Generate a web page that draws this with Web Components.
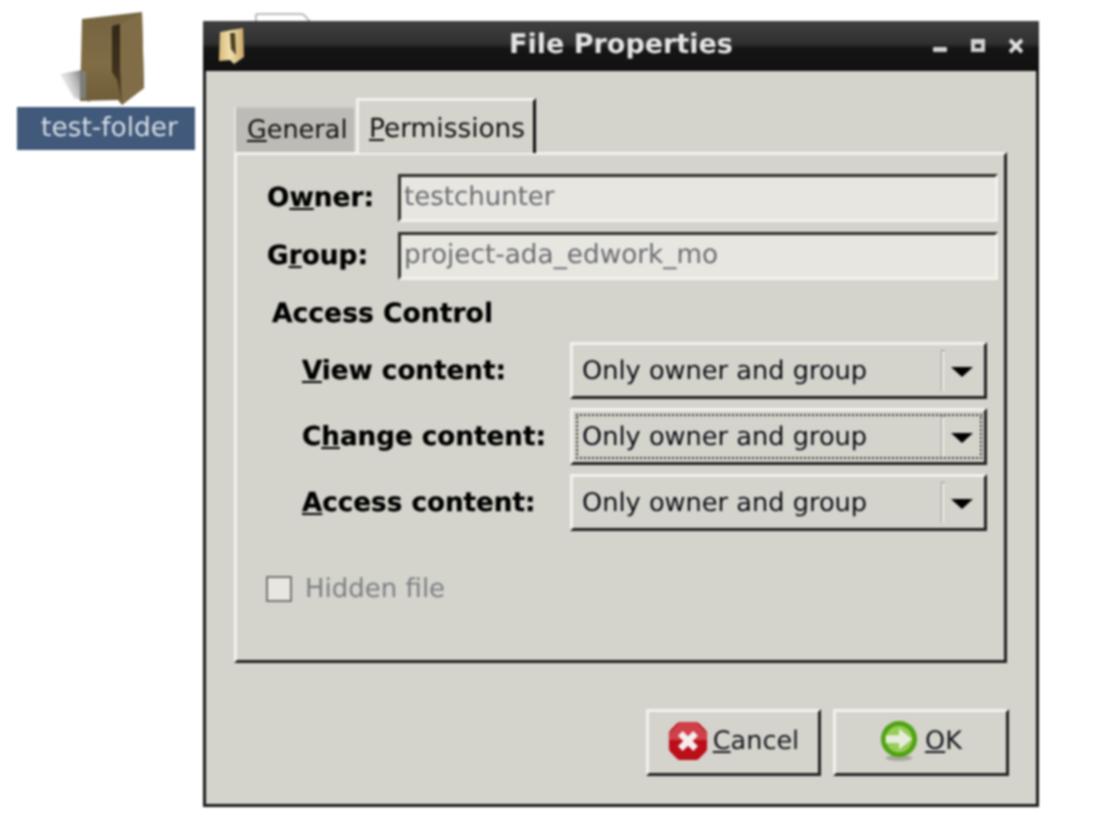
<!DOCTYPE html>
<html><head><meta charset="utf-8">
<style>
html,body{margin:0;padding:0;background:#fff;width:1096px;height:830px;overflow:hidden}
body{font-family:"DejaVu Sans",sans-serif;font-size:26px;color:#111;text-rendering:geometricPrecision}
</style></head><body>
<x-desktop>
  <x-desktop-icon slot="icons">test-folder</x-desktop-icon>
  <x-window slot="windows" title="File Properties">
    <x-notebook>
      <x-tab slot="tabs" style="width:120px;font-size:25.5px"><u>G</u>eneral</x-tab>
      <x-tab slot="tabs" active style="width:180px;font-size:26.4px"><u>P</u>ermissions</x-tab>
      <x-form-row width="131"><b>O<u>w</u>ner:</b><x-entry slot="field">testchunter</x-entry></x-form-row>
      <x-form-row width="131" style="margin-top:10px"><b>G<u>r</u>oup:</b><x-entry slot="field" style="font-size:26.3px">project-ada_edwork_mo</x-entry></x-form-row>
      <x-section heading="Access Control">
        <x-combo-row><span><u>V</u>iew content:</span></x-combo-row>
        <x-combo-row focused><span>C<u>h</u>ange content:</span></x-combo-row>
        <x-combo-row><span><u>A</u>ccess content:</span></x-combo-row>
      </x-section>
      <x-check>Hidden file</x-check>
    </x-notebook>
    <x-button slot="actions" kind="cancel" style="width:175px"><u>C</u>ancel</x-button>
    <x-button slot="actions" kind="ok"><u>O</u>K</x-button>
  </x-window>
</x-desktop>
<script>
function def(name,css,html){
  customElements.define(name,class extends HTMLElement{
    connectedCallback(){
      if(this.shadowRoot)return;
      const r=this.attachShadow({mode:'open'});
      r.innerHTML='<style>'+css+'</style>'+(typeof html==='function'?html(this):html);
    }
  });
}
def('x-desktop',`:host{display:block;position:relative;width:1096px;height:830px;overflow:hidden;filter:blur(.8px)}`,
`<slot name="icons"></slot>
<svg style="position:absolute;left:254px;top:11px" width="60" height="12"><path d="M2 12V4Q2 3 4 3H47Q49 3 51 5L57 12" fill="#fff" stroke="#bbb" stroke-width="2"/></svg>
<slot name="windows"></slot>`);
def('x-desktop-icon',`:host{position:absolute;left:17px;top:12px;width:178px;display:flex;flex-direction:column;align-items:stretch}
svg{display:block;margin-bottom:1px}
.l{height:43px;background:#41597a;color:#d6dde6;display:flex;align-items:center;justify-content:center;padding:0 0 1px 7px;box-sizing:border-box;font-size:26.4px;line-height:1}`,
`<svg width="178" height="94" viewBox="17 12 178 94">
<defs><linearGradient id="s" x1="1" x2="0" y1="0" y2=".4"><stop offset="0" stop-color="#3a3a3a"/><stop offset="1" stop-color="#ccc" stop-opacity=".25"/></linearGradient>
<linearGradient id="d" x1="0" x2="0" y1="0" y2="1"><stop offset="0" stop-color="#332818"/><stop offset=".6" stop-color="#3f331d"/><stop offset="1" stop-color="#615030"/></linearGradient>
<linearGradient id="b" x1="0" x2="0" y1="0" y2="1"><stop offset="0" stop-color="#75643f"/><stop offset=".55" stop-color="#806c45"/><stop offset="1" stop-color="#6e5c38"/></linearGradient></defs>
<path d="M82 70L60 74L74 98L90 102Z" fill="url(#s)"/>
<path d="M82 19L142 12L144 88L122 105L118 100L80 101Z" fill="url(#b)"/>
<path d="M120 24L142 13L144 88L122 104L120 70Z" fill="#806c46"/>
<path d="M112 26L120 24V68L122 104L117 80L112 72Z" fill="url(#d)"/>
<path d="M80 72L86 70V99H80Z" fill="#7c7e78"/>
</svg><div class="l"><slot></slot></div>`);
def('x-window',`:host{position:absolute;left:203px;top:21px;width:836px;height:786px;box-sizing:border-box;border:3px solid #1c1c1a;border-top:0;background:#d4d3cc;display:flex;flex-direction:column}
.t{height:50px;flex:none;background:linear-gradient(#404040 0,#303030 45%,#151515 55%,#111 100%);display:grid;grid-template-columns:1fr auto 1fr;align-items:center;margin:0 -3px;color:#e4e4e4;font-weight:bold;font-size:27px}
.t span{padding-bottom:4px}
.i{display:block;margin-left:14px}
.w{justify-self:end;display:flex;gap:24px;margin-right:16px;align-items:center}
.b{flex:1;display:flex;flex-direction:column;padding:27px 29px 28px 28px}
.a{display:flex;justify-content:flex-end;gap:12px;margin:46px -2px 0 0}`,
h=>`<div class="t"><svg class="i" width="28" height="38" viewBox="0 0 28 38"><defs><linearGradient id="f" x1="0" x2="1" y1="0" y2="0"><stop offset="0" stop-color="#d9bb78"/><stop offset=".45" stop-color="#f0dfae"/><stop offset="1" stop-color="#c8a868"/></linearGradient></defs><path d="M3 5L26 1L27 30L17 37L13 33L2 34Z" fill="url(#f)"/><path d="M13 6H18L19 28L14 22Z" fill="#4d3f24"/></svg>
<span>${h.getAttribute('title')}</span>
<div class="w"><svg width="14" height="16"><rect x="0" y="9" width="14" height="5" rx="1" fill="#d0d0d0"/></svg><svg width="14" height="16"><path d="M0 1h14v13H0zM4 6v4h6V6z" fill="#d0d0d0" fill-rule="evenodd"/></svg><svg width="14" height="16"><path d="M1 2L13 14M13 2L1 14" stroke="#e0e0e0" stroke-width="4"/></svg></div></div>
<div class="b"><slot></slot><div class="a"><slot name="actions"></slot></div></div>`);
def('x-notebook',`:host{display:block}
.tabs{display:flex;align-items:flex-end;gap:2px;height:54px;position:relative;z-index:1}
.p{height:511px;box-sizing:border-box;border-top:3px solid #f2f1ec;border-left:3px solid #f2f1ec;border-right:3px solid #222;border-bottom:3px solid #222;padding:19px 6px 0 29px;display:flex;flex-direction:column}`,
`<div class="tabs"><slot name="tabs"></slot></div><div class="p"><slot></slot></div>`);
def('x-tab',`:host{display:block;box-sizing:border-box;height:46px;padding:0 0 0 11px;background:#bcbbb5;border-top:2px solid #cfcec8;border-left:2px solid #e6e5df;line-height:44px;white-space:nowrap}
:host([active]){height:55px;line-height:56px;background:#d4d3cc;margin-bottom:-1px;border-top:3px solid #f2f1ec;border-left:3px solid #f2f1ec;border-right:3px solid #111;padding:0 0 0 10px}`,`<slot></slot>`);
def('x-form-row',`:host{display:flex;align-items:stretch;height:48px;margin-left:1px}
.l{flex:none;display:flex;align-items:center;padding-bottom:2px;color:#000;font-size:26.4px;-webkit-text-stroke:.25px #000}`,
h=>`<div class="l" style="width:${h.getAttribute('width')}px"><slot></slot></div><slot name="field"></slot>`);
def('x-entry',`:host{display:flex;align-items:center;flex:1;box-sizing:border-box;background:#e8e6e0;border-top:3px solid #2e2e2c;border-left:3px solid #2e2e2c;border-right:3px solid #f2f1ec;border-bottom:3px solid #f2f1ec;padding:0 0 3px 3px;color:#696c72;white-space:nowrap;-webkit-text-stroke:0}`,`<slot></slot>`);
def('x-section',`:host{display:flex;flex-direction:column;margin-top:16px}
h3{font:inherit;font-weight:bold;font-size:26.6px;color:#000;margin:0;padding:0 0 0 6px;height:32px;line-height:36px;-webkit-text-stroke:.25px #000}
.r{display:flex;flex-direction:column;gap:9px;margin-top:14px}`,
h=>`<h3>${h.getAttribute('heading')}</h3><div class="r"><slot></slot></div>`);
def('x-combo-row',`:host{display:flex;align-items:center;height:57px;font-weight:bold;font-size:26.2px;color:#000;padding-left:36px}
.l{width:268px;flex:none;box-sizing:border-box;padding-top:1px;-webkit-text-stroke:.25px #000}
.c{flex:none;width:417px;height:57px;box-sizing:border-box;background:#d4d3cc;border-top:3px solid #f2f1ec;border-left:3px solid #f2f1ec;border-right:3px solid #222;border-bottom:3px solid #222;display:flex;align-items:center;font-weight:normal;font-size:25.65px;color:#0a0d14;position:relative;padding-left:9px;white-space:nowrap}
.s{position:absolute;left:368px;top:5px;bottom:5px;width:3px;border-left:1px solid #9a9994;border-top:1px solid #9a9994;background:linear-gradient(90deg,#f0efea 60%,transparent 60%)}
.v{position:absolute;left:378px;top:22px;width:0;height:0;border:11px solid transparent;border-top:10px solid #000;border-bottom:0}
.f{position:absolute;inset:3px 2px 3px 3px;border:2px dotted #33332e}`,
h=>`<div class="l"><slot></slot></div><div class="c">Only owner and group<i class="s"></i><i class="v"></i>${h.hasAttribute('focused')?'<i class="f"></i>':''}</div>`);
def('x-check',`:host{display:flex;align-items:center;gap:13px;margin:42px 0 0 0;color:#7c7f85}
i{display:block;width:26px;height:26px;box-sizing:border-box;background:#e8e6e0;border:2px solid #76756f}
span{padding-top:1px}`,
`<i></i><span><slot></slot></span>`);
def('x-button',`:host{display:flex;align-items:center;justify-content:center;gap:5px;box-sizing:border-box;width:176px;height:67px;background:#d4d3cc;border-top:3px solid #f2f1ec;border-left:3px solid #f2f1ec;border-right:3px solid #222;border-bottom:3px solid #222;color:#14171d;padding-bottom:3px;font-size:25.5px}
svg{display:block;flex:none}`,
h=>`${h.getAttribute('kind')==='cancel'?
`<svg width="40" height="40" viewBox="0 0 42 42"><path d="M13 1H29Q31 1 33 3L39 9Q41 11 41 13V29Q41 31 39 33L33 39Q31 41 29 41H13Q11 41 9 39L3 33Q1 31 1 29V13Q1 11 3 9L9 3Q11 1 13 1Z" fill="#bb0e1b"/><path d="M13 1H29L41 13V20H1V13Z" fill="#d04049"/><path d="M13 13L29 29M29 13L13 29" stroke="#f6eeee" stroke-width="7"/></svg>`:
`<svg width="38" height="42" viewBox="0 0 40 44" style="margin-right:2px"><ellipse cx="20" cy="40" rx="14" ry="3" fill="#a8a79f"/><circle cx="20" cy="20" r="19" fill="#4fa312"/><circle cx="20" cy="20" r="14" fill="#96cc58"/><path d="M6 16H20V9L34 20L20 31V24H6Z" fill="#e6ecdc"/></svg>`}<span><slot></slot></span>`);
</script>
</body></html>
